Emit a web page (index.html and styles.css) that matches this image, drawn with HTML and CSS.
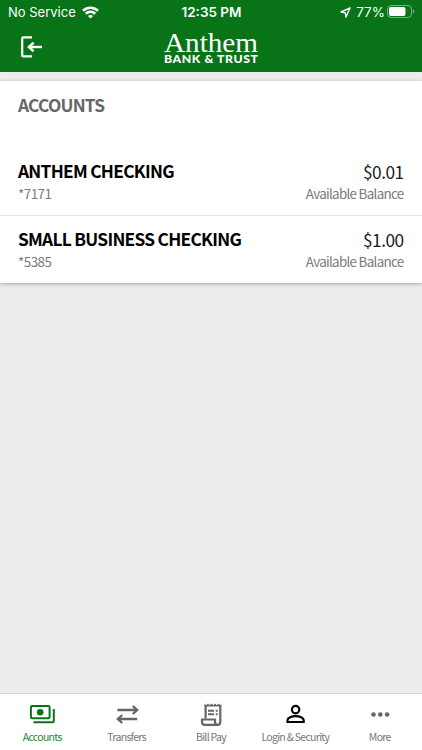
FILE: index.html
```html
<!DOCTYPE html>
<html lang="en">
<head>
<meta charset="utf-8">
<title>Accounts</title>
<link rel="stylesheet" href="styles.css">
</head>
<body>
<header class="header">
  <div class="status">
    <div class="carrier"><span>No Service</span>
      <svg width="17" height="13" viewBox="0 0 17 13" fill="none" stroke="#fff" stroke-width="2.6"><path d="M1 4.8C5.2.8 11.8.8 16 4.8M3.8 7.7c2.7-2.5 6.7-2.5 9.4 0"/><path d="M8.5 12.6 5.9 9.9c1.5-1.3 3.7-1.3 5.2 0z" fill="#fff" stroke="none"/></svg>
    </div>
    <div class="clock">12:35 PM</div>
    <div class="power">
      <svg width="11" height="11" viewBox="0 0 11 11" fill="none" stroke="#fff" stroke-width="1.4" stroke-linejoin="round"><path d="M10 1 1 5l4.2.7L6 10z"/></svg>
      <span>77%</span>
      <svg class="battery" width="28" height="13" viewBox="0 0 28 13"><rect x=".5" y=".5" width="24" height="12" rx="3.5" fill="none" stroke="#fff" stroke-opacity=".45"/><rect x="2" y="2" width="16.5" height="9" rx="2" fill="#fff"/><path d="M26 4.5c1.7.6 1.7 3.4 0 4z" fill="#fff" fill-opacity=".5"/></svg>
    </div>
  </div>
  <div class="brand">
    <svg class="logout" width="22" height="22" viewBox="0 0 22 22" fill="none" stroke="#fff" stroke-width="2.2"><path d="M12 1.4H3.2q-1 0-1 1v17q0 1 1 1H12"/><path d="M22 11H10" stroke-width="2.4"/><path d="m13.6 6.6-4.6 4.4 4.6 4.4" stroke-width="2.6"/></svg>
    <svg class="logo" width="98" height="36" viewBox="0 0 98 36" role="img" aria-label="Anthem Bank &amp; Trust"><text class="logo-name" x="1" y="22" textLength="94" lengthAdjust="spacingAndGlyphs">Anthem</text><text class="logo-sub" x="1" y="32.7" textLength="94.5" lengthAdjust="spacingAndGlyphs">BANK &amp; TRUST</text></svg>
  </div>
</header>
<main class="content">
  <section class="card">
    <h1 class="title">ACCOUNTS</h1>
    <div class="account">
      <div><h2 class="name">ANTHEM CHECKING</h2><p class="sub number">*7171</p></div>
      <div class="balance"><p class="amount">$0.01</p><p class="sub">Available Balance</p></div>
    </div>
    <div class="account">
      <div><h2 class="name">SMALL BUSINESS CHECKING</h2><p class="sub number">*5385</p></div>
      <div class="balance"><p class="amount">$1.00</p><p class="sub">Available Balance</p></div>
    </div>
  </section>
</main>
<nav class="tabs">
  <a class="tab active"><svg width="26" height="26" viewBox="0 0 26 26" fill="none" stroke="currentColor" stroke-width="2"><rect x="1.9" y="4.1" width="18.7" height="12.1" rx="1.2"/><circle cx="11.2" cy="10.2" r="3.3" fill="currentColor" stroke="none"/><path d="M24.8 7v12q0 1.2-1.2 1.2H4.5"/></svg><span>Accounts</span></a>
  <a class="tab"><svg width="26" height="26" viewBox="0 0 26 26" fill="none" stroke="currentColor" stroke-width="2.3"><path d="M3.4 8h19.5M18.8 4 23.2 8l-4.4 4M23.2 17H4M8.2 13 3.8 17l4.4 4"/></svg><span>Transfers</span></a>
  <a class="tab"><svg width="26" height="26" viewBox="0 0 26 26" fill="none" stroke="currentColor" stroke-width="2.2"><path d="M7.6 16.2V3M22.3 3v17q0 2.8-2.8 2.8H6.8Q4 22.8 4 20v-2.5h13V20q0 2.8 2.7 2.8"/><path d="m6.5 4.6 0-2.9 1.6 1.5 1.8-1.7 1.8 1.7 1.8-1.7 1.8 1.7 1.8-1.7 1.8 1.7 1.8-1.7 1.8 1.7.7-1.5v2.9z" fill="currentColor" stroke="none"/><path d="M10 8.7h6M10 12.2h6M17.7 8.7h2M17.7 12.2h2" stroke-width="1.9"/></svg><span>Bill Pay</span></a>
  <a class="tab dark"><svg width="26" height="26" viewBox="0 0 26 26" fill="none" stroke="currentColor" stroke-width="2.2"><circle cx="13.6" cy="7.6" r="3.7"/><path d="M5.5 20v-1.8c0-2.4 4-4 8.1-4s8.1 1.6 8.1 4V20z"/></svg><span>Login &amp; Security</span></a>
  <a class="tab"><svg width="26" height="26" viewBox="0 0 26 26" fill="currentColor"><circle cx="6.5" cy="12.5" r="2.3"/><circle cx="13.3" cy="12.5" r="2.3"/><circle cx="20.1" cy="12.5" r="2.3"/></svg><span>More</span></a>
</nav>
</body>
</html>
```
FILE: styles.css
```css
* { box-sizing: border-box; }
body {
  margin: 0;
  height: 750px;
  display: flex;
  flex-direction: column;
  background: #ededed;
  font-family: "Noto Sans CJK SC", sans-serif;
  overflow: hidden;
}
h1, h2, p { margin: 0; }
svg { display: block; flex: none; }
.header { height: 72px; background: #087317; color: #fff; }
.status {
  height: 24px;
  padding: 0 7px 0 8px;
  display: grid;
  grid-template-columns: 1fr auto 1fr;
  align-items: center;
  font: 13px/24px Inter, sans-serif;
}
.carrier, .power { display: flex; align-items: center; }
.carrier { gap: 6px; }
.clock { font-weight: 600; font-size: 13.5px; }
.power { justify-content: flex-end; gap: 5px; }
.power span { font-size: 13.5px; }
.battery { margin: -1px 0 0 -3px; }
.brand {
  height: 48px;
  padding: 6px 20px 0;
  display: grid;
  grid-template-columns: 1fr 96px 1fr;
}
.logout { margin-top: 6px; }
.logo { fill: #fff; overflow: visible; }
.logo-name { font: 27.5px "Liberation Serif", serif; }
.logo-sub { font: 900 10.8px Lato, sans-serif; letter-spacing: 0.5px; }
.content { flex: 1; padding-top: 9px; }
.card { background: #fff; height: 202px; box-shadow: 0 1px 4px rgba(0,0,0,.3); }
.title {
  height: 66px;
  padding: 10px 18px 0;
  font-size: 17.3px;
  line-height: 28px;
  font-weight: 700;
  letter-spacing: -0.75px;
  color: #666;
}
.account {
  height: 68px;
  padding: 10px 18px 0;
  display: flex;
  justify-content: space-between;
}
.account + .account { padding-top: 9px; border-top: 1px solid #e8e8e8; }
.name { font-size: 17.3px; line-height: 28px; font-weight: 700; letter-spacing: -0.71px; color: #000; }
.amount { padding-top: 1px; font-size: 17.3px; line-height: 27px; letter-spacing: -0.55px; color: #1a1a1a; }
.sub { margin-top: -1px; font-size: 13.4px; line-height: 18px; letter-spacing: -0.7px; color: #7a7a7a; }
.number { letter-spacing: -0.5px; }
.balance { text-align: right; padding-right: 0.5px; }
.tabs {
  height: 57px;
  background: #fff;
  border-top: 1px solid #d5d5d5;
  display: grid;
  grid-template-columns: repeat(5, 1fr);
}
.tab {
  padding-top: 8px;
  display: flex;
  flex-direction: column;
  align-items: center;
  color: #666;
  font-size: 10.5px;
  line-height: 18px;
  letter-spacing: -0.7px;
  white-space: nowrap;
}
.tab span { color: #777; }
.active { color: #087317; }
.active span { color: #278733; }
.dark svg { color: #000; }
```
